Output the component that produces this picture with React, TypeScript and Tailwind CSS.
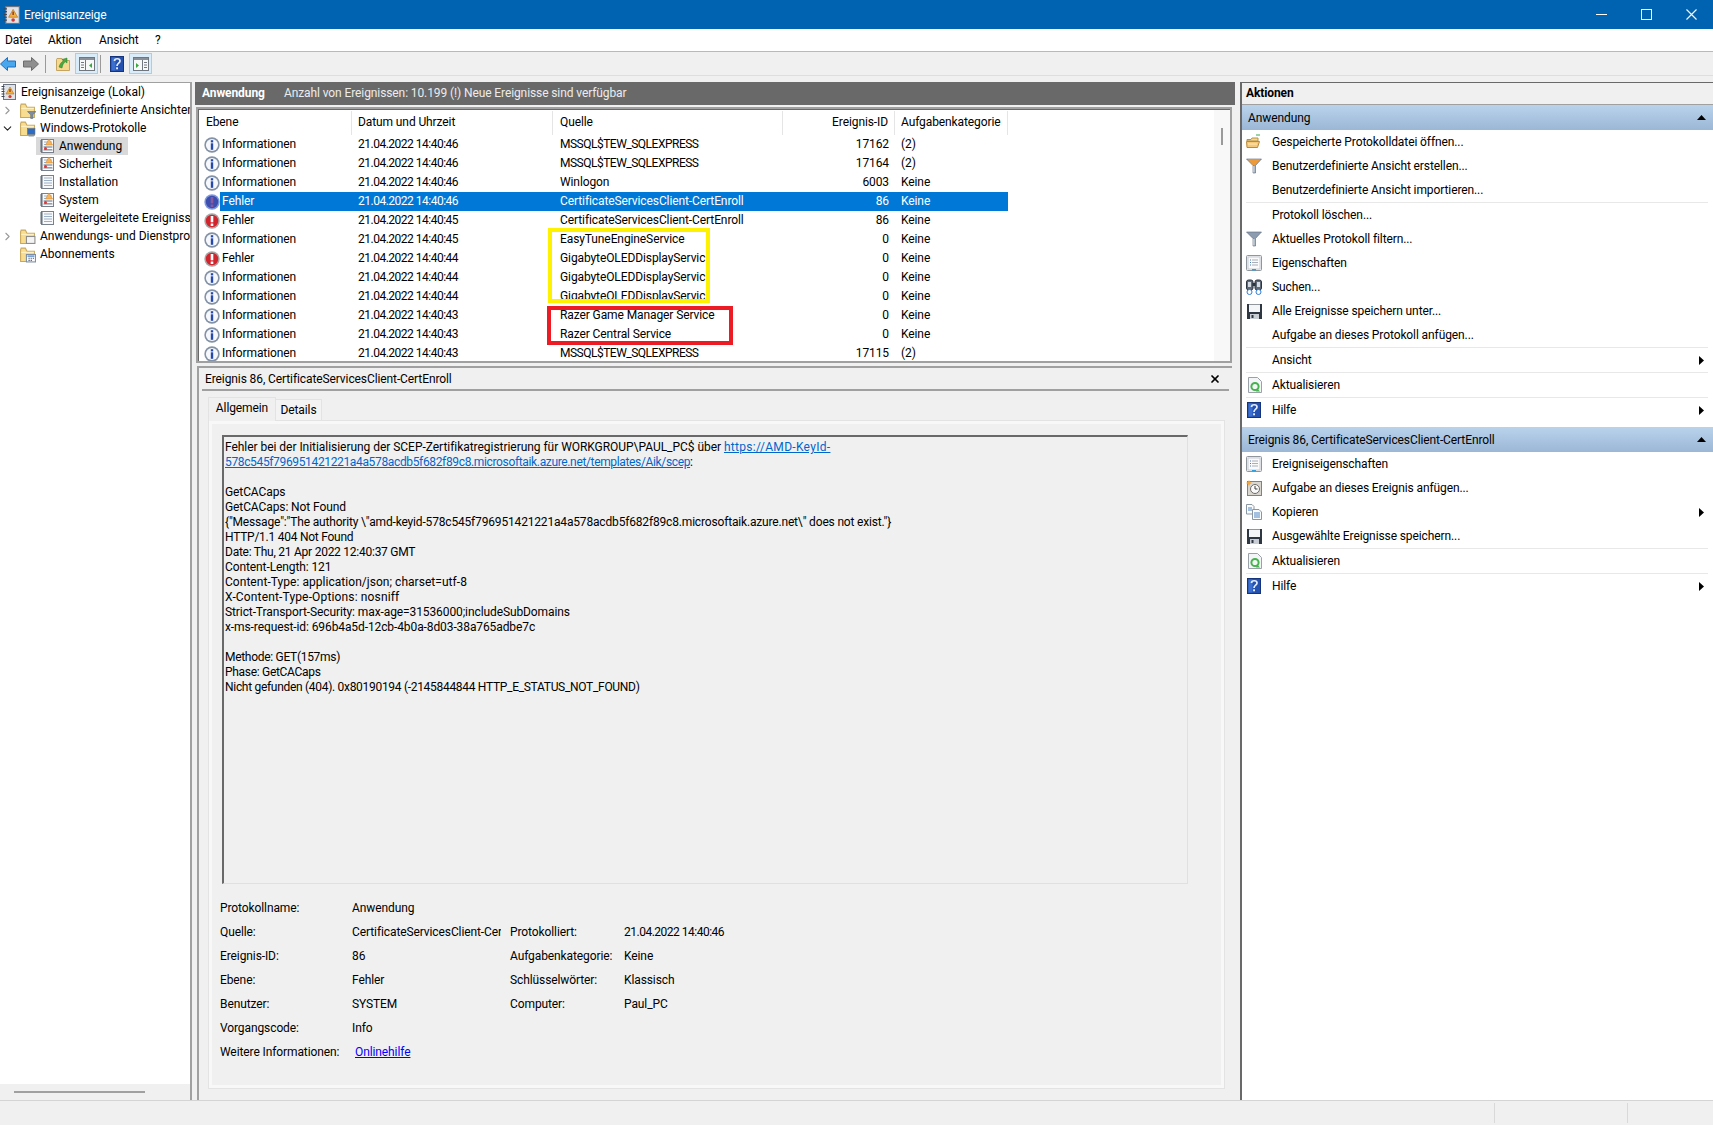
import { ChevronDown, ChevronRight, X } from 'lucide-react'
import type { ReactNode } from 'react'

function InfoIcon() {
  return (
    <svg width="16" height="16" viewBox="0 0 16 16" className="shrink-0">
      <circle cx="8" cy="8" r="7.700" fill="#8492a6" />
      <circle cx="8" cy="8" r="6.100" fill="#f6f8fc" />
      <rect x="6.800" y="3.200" width="2.400" height="2.200" fill="#2548ac" />
      <rect x="6.800" y="6.300" width="2.400" height="6.500" fill="#2548ac" />
    </svg>
  )
}

function ErrorIcon({ selected }: { selected?: boolean }) {
  return (
    <svg width="16" height="16" viewBox="0 0 16 16" className="shrink-0">
      <circle cx="8" cy="8" r="7.700" fill={selected ? '#7f98dc' : '#a7a7a7'} />
      <circle cx="8" cy="8" r="6.200" fill={selected ? '#3d4fae' : '#d2242c'} />
      <rect x="6.700" y="3" width="2.600" height="6.300" fill={selected ? '#8a5a9e' : '#ffffff'} />
      <rect x="6.700" y="10.500" width="2.600" height="2.500" fill={selected ? '#8a5a9e' : '#ffffff'} />
    </svg>
  )
}

function LogIcon({ alert }: { alert?: boolean }) {
  return (
    <svg width="16" height="16" viewBox="0 0 16 16" className="shrink-0">
      <rect x="2.500" y="1.500" width="12" height="13" fill="#f7f9fb" stroke="#77808c" />
      <path d="M1 3h3M1 5h3M1 7h3M1 9h3M1 11h3M1 13h3" stroke="#5d6672" />
      <path d="M5 4h8M5 6.500h8M5 9h8M5 11.500h8" stroke="#9db0c6" />
      {alert && (
        <>
          <path d="M10 1l3.500 6h-7z" fill="#f6b45c" stroke="#d98a2b" strokeWidth="0.6" />
          <path d="M4.500 9h9M4.500 12h9" stroke="#8a8f96" />
          <circle cx="6.500" cy="10.500" r="1.500" fill="#d8383a" />
        </>
      )}
    </svg>
  )
}

function FolderBase() {
  return (
    <>
      <path d="M1.500 3.500V14.500H14.500V5H7.500L6 2H2z" fill="#f8dc8f" stroke="#c9a75a" />
      <path d="M2 6h12" stroke="#fff2c8" />
    </>
  )
}

function FolderIcon({ kind }: { kind: 'filter' | 'logs' | 'apps' | 'subs' }) {
  return (
    <svg width="17" height="17" viewBox="0 0 16 16" className="shrink-0">
      <FolderBase />
      {kind === 'filter' && <path d="M8 9h8l-3 3v3.500h-2V12z" fill="#7d8ea3" stroke="#4f6074" strokeWidth="0.5" />}
      {kind === 'logs' && (
        <>
          <rect x="8" y="8" width="7" height="5.500" fill="#2c6cc4" stroke="#5e6f85" strokeWidth="0.6" />
          <rect x="9" y="14" width="5" height="1.500" fill="#8a96a5" />
        </>
      )}
      {kind === 'apps' && <rect x="7" y="8" width="8" height="6.500" fill="#f4f4f4" stroke="#8c8c8c" />}
      {kind === 'subs' && (
        <>
          <rect x="7" y="8" width="8.500" height="7" fill="#fbfbfb" stroke="#7d8ea3" />
          <path d="M8 9.500h6.500" stroke="#2c6cc4" />
          <path d="M9 11.500h1M11 11.500h1M13 11.500h1M9 13.500h1M11 13.500h1" stroke="#33415a" />
        </>
      )}
    </svg>
  )
}

function AppIcon({ size = 16 }: { size?: number }) {
  return (
    <svg width={size} height={size} viewBox="0 0 16 16" className="shrink-0">
      <rect x="2.500" y="0.500" width="12" height="15" fill="#dfe3e8" stroke="#6b7480" />
      <path d="M0.500 2.500h3M0.500 5h3M0.500 7.500h3M0.500 10h3M0.500 12.500h3" stroke="#3d4652" />
      <path d="M9 3l4 7H5z" fill="#f2b13e" stroke="#b46d1c" strokeWidth="0.6" />
      <rect x="8.400" y="5" width="1.200" height="3" fill="#8a2f22" />
      <circle cx="9" cy="12.500" r="1.600" fill="#d23a34" />
    </svg>
  )
}

function HelpIcon() {
  return (
    <svg width="14" height="16" viewBox="0 0 14 16" className="ml-px shrink-0">
      <rect x="0.500" y="0.500" width="13" height="15" fill="#2450b0" stroke="#16347c" />
      <rect x="1.500" y="1.500" width="4" height="13" fill="#3b70d0" />
      <path d="M4.500 5c0-3 5.500-3 5.500 0 0 2.200-3 2.200-3 5" fill="none" stroke="#e6eefb" strokeWidth="1.700" />
      <rect x="6.100" y="11.300" width="1.900" height="2" fill="#e6eefb" />
    </svg>
  )
}

function OpenIcon() {
  return (
    <svg width="16" height="16" viewBox="0 0 16 16" className="shrink-0">
      <path d="M10 1h4" stroke="#3aa84a" />
      <path d="M1 5.500h4l1-1.500h6v3H1z" fill="#f4d88e" stroke="#b89249" />
      <path d="M0.500 7.500h13l-2 6H1z" fill="#f6c97a" stroke="#b88a3d" />
      <path d="M2 10h9" stroke="#fde9b8" />
    </svg>
  )
}

function FilterIcon({ orange }: { orange?: boolean }) {
  return (
    <svg width="16" height="16" viewBox="0 0 16 16" className="shrink-0">
      <path d="M0.500 1h15L9.500 7.500V15h-2.500V7.500z" fill="#8d9cae" stroke="#5a6a7d" strokeWidth="0.6" />
      {orange && <path d="M1.500 1.300h13L9.300 7H6.700z" fill="#ef9a38" />}
      <path d="M7.300 8h1.200v6.500H7.300z" fill="#d9e0e8" />
    </svg>
  )
}

function PropsIcon() {
  return (
    <svg width="16" height="16" viewBox="0 0 16 16" className="shrink-0">
      <rect x="0.500" y="0.500" width="15" height="15" rx="1" fill="#f1f2f4" stroke="#8f969e" />
      <rect x="2" y="2" width="12" height="12" fill="#fafafa" stroke="#c8ccd1" />
      <path d="M4 5h1M4 7.500h1M4 10h1" stroke="#4a78b8" />
      <path d="M6 5h6M6 7.500h6M6 10h6" stroke="#a8afb8" />
      <rect x="6" y="14" width="4" height="1.500" fill="#2f9ee0" />
    </svg>
  )
}

function FindIcon() {
  return (
    <svg width="16" height="16" viewBox="0 0 16 16" className="shrink-0">
      <rect x="0.500" y="1" width="6.500" height="10" rx="2" fill="#5e6a78" stroke="#2d3540" />
      <rect x="9" y="1" width="6.500" height="10" rx="2" fill="#5e6a78" stroke="#2d3540" />
      <rect x="2" y="3" width="3" height="5" fill="#d4dbe3" />
      <rect x="11" y="3" width="3" height="5" fill="#d4dbe3" />
      <rect x="6.500" y="4" width="3" height="3" fill="#2d3540" />
      <circle cx="3.500" cy="13" r="2.500" fill="#fff" stroke="#2f7fd8" />
      <circle cx="12.500" cy="13" r="2.500" fill="#fff" stroke="#2f7fd8" />
    </svg>
  )
}

function SaveIcon() {
  return (
    <svg width="15" height="15" viewBox="0 0 15 15" className="ml-px shrink-0">
      <rect x="0" y="0" width="15" height="15" fill="#2f3742" />
      <rect x="2" y="0.500" width="11" height="7.500" fill="#f5f6f7" />
      <rect x="3" y="10" width="9" height="5" fill="#c9ced4" />
      <rect x="4.500" y="11" width="2" height="3" fill="#2f3742" />
    </svg>
  )
}

function RefreshIcon() {
  return (
    <svg width="14" height="16" viewBox="0 0 14 16" className="ml-[2px] shrink-0">
      <path d="M0.500 0.500h9l4 4v11H0.500z" fill="#f4f5f6" stroke="#9aa1a8" />
      <circle cx="7" cy="9.500" r="3.600" fill="none" stroke="#46b34f" strokeWidth="2" />
      <path d="M9 11l3 3.500H8z" fill="#46b34f" />
    </svg>
  )
}

function TaskIcon() {
  return (
    <svg width="16" height="16" viewBox="0 0 16 16" className="shrink-0">
      <rect x="1.500" y="1.500" width="14" height="14" fill="#d9d6d0" stroke="#86807a" />
      <circle cx="9" cy="9" r="4.500" fill="#fafafa" stroke="#6e6a66" />
      <path d="M9 6v3h2.500" fill="none" stroke="#3c3c3c" />
      <path d="M3 0l1 2 2 1-2 1-1 2-1-2-2-1 2-1z" fill="#f4a53a" />
    </svg>
  )
}

function CopyIcon() {
  return (
    <svg width="16" height="16" viewBox="0 0 16 16" className="shrink-0">
      <path d="M0.500 0.500H6l2 2V10H0.500z" fill="#fafbfc" stroke="#8b96a3" />
      <path d="M2 4h4M2 6h4" stroke="#4f86c6" />
      <path d="M6.500 5.500H13l2.500 2.500v7.500h-9z" fill="#fafbfc" stroke="#8b96a3" />
      <path d="M8 9h6M8 11h6M8 13h6" stroke="#4f86c6" />
    </svg>
  )
}

function ArrowIcon({ back }: { back?: boolean }) {
  return (
    <svg width="16" height="16" viewBox="0 0 16 16" className="shrink-0">
      {back ? (
        <path d="M0.500 8L7.500 1.500V5H15.500V11H7.500v3.500z" fill="#49a7ee" stroke="#1e6fc2" />
      ) : (
        <path d="M15.500 8L8.500 1.500V5H0.500V11H8.500v3.500z" fill="#8f8f8f" stroke="#6c6c6c" />
      )}
    </svg>
  )
}

function PaneIcon({ right }: { right?: boolean }) {
  return (
    <svg width="16" height="16" viewBox="0 0 16 16" className="shrink-0">
      <rect x="0.500" y="1.500" width="15" height="13" fill="#f7f8f8" stroke="#70777f" />
      <rect x="1" y="2" width="14" height="2" fill="#8a9099" />
      {right ? (
        <>
          <path d="M3 7l3 2.500L3 12z" fill="#37a93f" />
          <path d="M9.500 4v10.500" stroke="#70777f" />
          <path d="M11 6.500h3M11 9h3M11 11.500h3" stroke="#70777f" />
        </>
      ) : (
        <>
          <path d="M13 7l-3 2.500L13 12z" fill="#37a93f" />
          <path d="M6.500 4v10.500" stroke="#70777f" />
          <path d="M2 6.500h3M2 9h3M2 11.500h3" stroke="#70777f" />
        </>
      )}
    </svg>
  )
}

function UpFolderIcon() {
  return (
    <svg width="16" height="16" viewBox="0 0 16 16" className="shrink-0">
      <path d="M1.500 3.500V14.500H14.500V4.500H8L7 2.500H2z" fill="#f6d98f" stroke="#c5a55f" />
      <path d="M4 11c1-3 2-5 4.500-6L7 3.500 12 2v5L10.300 5.800C8.500 7 7.500 9 7 12z" fill="#4aa83f" stroke="#2c7d2a" strokeWidth="0.5" />
    </svg>
  )
}

function CollapseArrow() {
  return (
    <svg width="9" height="5" viewBox="0 0 9 5" className="shrink-0">
      <path d="M4.500 0L9 5H0z" fill="#000" />
    </svg>
  )
}

function SubmenuArrow() {
  return (
    <svg width="5" height="9" viewBox="0 0 5 9" className="shrink-0">
      <path d="M0 0l5 4.500L0 9z" fill="#000" />
    </svg>
  )
}

function WindowButtons() {
  return (
    <div className="-mr-px flex">
      <div className="flex w-[45px] justify-center">
        <svg width="11" height="11" viewBox="0 0 11 11" shapeRendering="crispEdges">
          <path d="M0 5.500h11" stroke="#fff" />
        </svg>
      </div>
      <div className="flex w-[45px] justify-center">
        <svg width="11" height="11" viewBox="0 0 11 11" shapeRendering="crispEdges">
          <rect x="0.500" y="0.500" width="10" height="10" fill="none" stroke="#fff" />
        </svg>
      </div>
      <div className="flex w-[45px] justify-center">
        <svg width="11" height="11" viewBox="0 0 11 11">
          <path d="M0.500 0.500l10 10M10.500 0.500l-10 10" stroke="#fff" strokeWidth="1.100" />
        </svg>
      </div>
    </div>
  )
}

type Row = { error?: boolean; selected?: boolean; time: string; source: string; id: string; cat: string }

const rows: Row[] = [
  { time: '21.04.2022 14:40:46', source: 'MSSQL$TEW_SQLEXPRESS', id: '17162', cat: '(2)' },
  { time: '21.04.2022 14:40:46', source: 'MSSQL$TEW_SQLEXPRESS', id: '17164', cat: '(2)' },
  { time: '21.04.2022 14:40:46', source: 'Winlogon', id: '6003', cat: 'Keine' },
  { error: true, selected: true, time: '21.04.2022 14:40:46', source: 'CertificateServicesClient-CertEnroll', id: '86', cat: 'Keine' },
  { error: true, time: '21.04.2022 14:40:45', source: 'CertificateServicesClient-CertEnroll', id: '86', cat: 'Keine' },
  { time: '21.04.2022 14:40:45', source: 'EasyTuneEngineService', id: '0', cat: 'Keine' },
  { error: true, time: '21.04.2022 14:40:44', source: 'GigabyteOLEDDisplayServic', id: '0', cat: 'Keine' },
  { time: '21.04.2022 14:40:44', source: 'GigabyteOLEDDisplayServic', id: '0', cat: 'Keine' },
  { time: '21.04.2022 14:40:44', source: 'GigabyteOLEDDisplayServic', id: '0', cat: 'Keine' },
  { time: '21.04.2022 14:40:43', source: 'Razer Game Manager Service', id: '0', cat: 'Keine' },
  { time: '21.04.2022 14:40:43', source: 'Razer Central Service', id: '0', cat: 'Keine' },
  { time: '21.04.2022 14:40:43', source: 'MSSQL$TEW_SQLEXPRESS', id: '17115', cat: '(2)' },
]

function TreeRow({ indent, icon, label, chevron }: { indent: string; icon: ReactNode; label: string; chevron?: 'right' | 'down' }) {
  return (
    <div className={`relative flex h-[18px] items-center whitespace-nowrap ${indent}`}>
      {chevron === 'right' && <ChevronRight size={13} className="absolute left-[1px] text-[#9a9a9a]" />}
      {chevron === 'down' && <ChevronDown size={13} className="absolute left-[1px] text-[#222]" />}
      {icon}
      <div className="ml-[4px] leading-[18px]">{label}</div>
    </div>
  )
}

function Tree() {
  return (
    <div className="flex w-[192px] shrink-0 flex-col border-t border-r-2 border-[#a0a0a0] bg-white tracking-normal">
      <div className="flex-1 overflow-hidden">
        <TreeRow indent="pl-[1px]" icon={<AppIcon />} label="Ereignisanzeige (Lokal)" />
        <TreeRow indent="pl-[19px]" icon={<FolderIcon kind="filter" />} label="Benutzerdefinierte Ansichten" chevron="right" />
        <TreeRow indent="pl-[19px]" icon={<FolderIcon kind="logs" />} label="Windows-Protokolle" chevron="down" />
        <div className="ml-[36px] flex h-[18px] w-[92px] items-center bg-[#d9d9d9] pl-[3px]">
          <LogIcon alert />
          <div className="ml-[4px] leading-[18px]">Anwendung</div>
        </div>
        <TreeRow indent="pl-[39px]" icon={<LogIcon alert />} label="Sicherheit" />
        <TreeRow indent="pl-[39px]" icon={<LogIcon />} label="Installation" />
        <TreeRow indent="pl-[39px]" icon={<LogIcon alert />} label="System" />
        <TreeRow indent="pl-[39px]" icon={<LogIcon />} label="Weitergeleitete Ereignisse" />
        <TreeRow indent="pl-[19px]" icon={<FolderIcon kind="apps" />} label="Anwendungs- und Dienstprotokolle" chevron="right" />
        <TreeRow indent="pl-[19px]" icon={<FolderIcon kind="subs" />} label="Abonnements" />
      </div>
      <div className="flex h-[16px] items-center bg-[#f0f0f0] pl-[14px]">
        <div className="h-[2px] w-[131px] bg-[#a0a0a0]" />
      </div>
    </div>
  )
}

function HeaderCell({ className, children }: { className: string; children: string }) {
  return <div className={`h-[24px] border-r border-[#e5e5e5] leading-[23px] ${className}`}>{children}</div>
}

function EventList() {
  return (
    <div className="border-2 border-[#a0a0a0] bg-white">
      <div className="relative flex h-[252px] overflow-hidden border-t border-l border-[#696969]">
        <div className="flex-1 pt-[1px] pl-[1px]">
          <div className="flex h-[24px]">
            <HeaderCell className="w-[152px] pl-[6px]">Ebene</HeaderCell>
            <HeaderCell className="w-[201px] pl-[6px]">Datum und Uhrzeit</HeaderCell>
            <HeaderCell className="w-[230px] pl-[7px]">Quelle</HeaderCell>
            <HeaderCell className="w-[112px] pr-[6px] text-right">Ereignis-ID</HeaderCell>
            <HeaderCell className="w-[113px] pl-[6px]">Aufgabenkategorie</HeaderCell>
          </div>
          {rows.map((row, i) => (
            <div key={i} className="flex h-[19px] whitespace-nowrap">
              <div className="flex w-[20px] items-center pl-[4px]">
                {row.error ? <ErrorIcon selected={row.selected} /> : <InfoIcon />}
              </div>
              <div className={`flex leading-[19px] ${row.selected ? 'bg-[#0078d7] text-white' : ''}`}>
                <div className="w-[132px] pl-[2px]">{row.error ? 'Fehler' : 'Informationen'}</div>
                <div className="w-[201px] pl-[6px] tracking-[-0.5px]">{row.time}</div>
                <div className={`w-[230px] overflow-hidden pl-[7px] ${row.source.startsWith('MSSQL') ? 'tracking-[-0.5px]' : ''}`}>{row.source}</div>
                <div className="w-[112px] pr-[6px] text-right">{row.id}</div>
                <div className="w-[113px] pl-[6px]">{row.cat}</div>
              </div>
            </div>
          ))}
        </div>
        <div className="w-[16px] shrink-0 bg-[#f8f8f8] pt-[18px] pl-[7px]">
          <div className="h-[17px] w-[2px] bg-[#9a9a9a]" />
        </div>
        <div className="absolute top-[118px] left-[349px] h-[75px] w-[162px] border-[4px] border-[#fff200]" />
        <div className="absolute top-[196px] left-[348px] h-[39px] w-[186px] border-[4px] border-[#ed1c24]" />
      </div>
    </div>
  )
}

const messageLines: [string, string][] = [
  ['GetCACaps', ''],
  ['GetCACaps: Not Found', ''],
  ['{"Message":"The authority \\"amd-keyid-578c545f796951421221a4a578acdb5f682f89c8.microsoftaik.azure.net\\" does not exist."}', 'tracking-[-0.17px]'],
  ['HTTP/1.1 404 Not Found', 'tracking-[-0.25px]'],
  ['Date: Thu, 21 Apr 2022 12:40:37 GMT', 'tracking-[-0.25px]'],
  ['Content-Length: 121', ''],
  ['Content-Type: application/json; charset=utf-8', 'tracking-[0.04px]'],
  ['X-Content-Type-Options: nosniff', 'tracking-[0.15px]'],
  ['Strict-Transport-Security: max-age=31536000;includeSubDomains', ''],
  ['x-ms-request-id: 696b4a5d-12cb-4b0a-8d03-38a765adbe7c', ''],
  ['', ''],
  ['Methode: GET(157ms)', 'tracking-[-0.3px]'],
  ['Phase: GetCACaps', 'tracking-[-0.3px]'],
  ['Nicht gefunden (404). 0x80190194 (-2145844844 HTTP_E_STATUS_NOT_FOUND)', 'tracking-[-0.3px]'],
]

function PropRow({ label, value, label2, value2, link }: { label: string; value?: string; label2?: string; value2?: string; link?: string }) {
  return (
    <div className="flex h-[24px] items-center whitespace-nowrap pl-[8px]">
      <div className="w-[132px]">{label}</div>
      <div className="w-[149px] overflow-hidden">
        {value}
        {link && <span className="ml-[3px] text-[#0000ff] underline">{link}</span>}
      </div>
      <div className="ml-[9px] w-[114px]">{label2}</div>
      <div className={value2?.startsWith('21.') ? 'tracking-[-0.5px]' : ''}>{value2}</div>
    </div>
  )
}

function Details() {
  return (
    <div className="flex flex-1 flex-col border-t-2 border-l-2 border-[#a0a0a0] pr-[3px] pl-[3px]">
      <div className="flex h-[23px] items-center justify-between border-b-2 border-[#a0a0a0] pr-[8px] pl-[3px]">
        <span>Ereignis 86, CertificateServicesClient-CertEnroll</span>
        <X size={12} strokeWidth={3.5} className="text-black" />
      </div>
      <div className="flex pt-[6px] pl-[6px]">
        <div className="relative z-10 -mb-px h-[24px] w-[68px] border-x border-t border-[#e3e3e3] bg-[#f0f0f0] text-center leading-[20px]">Allgemein</div>
        <div className="mt-[2px] h-[21px] w-[46px] border-t border-r border-[#e3e3e3] bg-[#f3f3f3] text-center leading-[21px]">Details</div>
      </div>
      <div className="mr-[4px] mb-[11px] ml-[6px] flex-1 border border-[#e3e3e3]">
        <div className="h-full border-[3px] border-[#f8f8f8] pt-[11px]">
          <div className="ml-[10px] h-[449px] w-[966px] overflow-hidden border-t-2 border-r border-b border-l-2 border-t-[#696969] border-r-[#e0e0e0] border-b-[#e0e0e0] border-l-[#696969] pt-[3px] pl-[1px] leading-[15px]">
            <div className="tracking-[-0.04px]">Fehler bei der Initialisierung der SCEP-Zertifikatregistrierung für WORKGROUP\PAUL_PC$ über <span className="tracking-[0.3px] text-[#0066cc] underline">https://AMD-KeyId-</span></div>
            <div><span className="tracking-[-0.35px] text-[#0066cc] underline">578c545f796951421221a4a578acdb5f682f89c8.microsoftaik.azure.net/templates/Aik/scep</span>:</div>
            <div className="h-[15px]" />
            {messageLines.map(([line, spacing], i) => (
              <div key={i} className={`h-[15px] whitespace-nowrap ${spacing}`}>{line}</div>
            ))}
          </div>
          <div className="mt-[12px]">
            <PropRow label="Protokollname:" value="Anwendung" />
            <PropRow label="Quelle:" value="CertificateServicesClient-CertEnroll" label2="Protokolliert:" value2="21.04.2022 14:40:46" />
            <PropRow label="Ereignis-ID:" value="86" label2="Aufgabenkategorie:" value2="Keine" />
            <PropRow label="Ebene:" value="Fehler" label2="Schlüsselwörter:" value2="Klassisch" />
            <PropRow label="Benutzer:" value="SYSTEM" label2="Computer:" value2="Paul_PC" />
            <PropRow label="Vorgangscode:" value="Info" />
            <PropRow label="Weitere Informationen:" link="Onlinehilfe" />
          </div>
        </div>
      </div>
    </div>
  )
}

function ActionHeader({ children }: { children: string }) {
  return (
    <div className="flex h-[25px] items-center justify-between bg-linear-to-b from-[#bad3ec] to-[#9bb7d6] pr-[7px] pl-[6px]">
      <span>{children}</span>
      <CollapseArrow />
    </div>
  )
}

function Action({ icon, label, arrow }: { icon?: ReactNode; label: string; arrow?: boolean }) {
  return (
    <div className="flex h-[24px] items-center pr-[9px] pl-[4px]">
      <div className="flex w-[26px] items-center">{icon}</div>
      <span className="flex-1">{label}</span>
      {arrow && <SubmenuArrow />}
    </div>
  )
}

function Sep() {
  return <div className="mr-[5px] ml-[4px] h-px bg-[#e8e8e8]" />
}

function Actions() {
  return (
    <div className="flex flex-1 flex-col border-t border-l-2 border-[#696969] bg-white">
      <div className="h-[22px] border-b border-[#a0a0a0] bg-[#f0f0f0] pl-[4px] leading-[21px] font-bold">Aktionen</div>
      <ActionHeader>Anwendung</ActionHeader>
      <Action icon={<OpenIcon />} label="Gespeicherte Protokolldatei öffnen..." />
      <Action icon={<FilterIcon orange />} label="Benutzerdefinierte Ansicht erstellen..." />
      <Action label="Benutzerdefinierte Ansicht importieren..." />
      <Sep />
      <Action label="Protokoll löschen..." />
      <Action icon={<FilterIcon />} label="Aktuelles Protokoll filtern..." />
      <Action icon={<PropsIcon />} label="Eigenschaften" />
      <Action icon={<FindIcon />} label="Suchen..." />
      <Action icon={<SaveIcon />} label="Alle Ereignisse speichern unter..." />
      <Action label="Aufgabe an dieses Protokoll anfügen..." />
      <Sep />
      <Action label="Ansicht" arrow />
      <Sep />
      <Action icon={<RefreshIcon />} label="Aktualisieren" />
      <Sep />
      <Action icon={<HelpIcon />} label="Hilfe" arrow />
      <div className="h-[5px]" />
      <ActionHeader>Ereignis 86, CertificateServicesClient-CertEnroll</ActionHeader>
      <Action icon={<PropsIcon />} label="Ereigniseigenschaften" />
      <Action icon={<TaskIcon />} label="Aufgabe an dieses Ereignis anfügen..." />
      <Action icon={<CopyIcon />} label="Kopieren" arrow />
      <Action icon={<SaveIcon />} label="Ausgewählte Ereignisse speichern..." />
      <Sep />
      <Action icon={<RefreshIcon />} label="Aktualisieren" />
      <Sep />
      <Action icon={<HelpIcon />} label="Hilfe" arrow />
    </div>
  )
}

export default function App() {
  return (
    <div className="flex h-[1125px] w-[1713px] flex-col overflow-hidden bg-[#f0f0f0] text-[12px] tracking-[-0.1px] text-black [font-family:Roboto,sans-serif]">
      <div className="flex h-[29px] shrink-0 items-center bg-[#0063b1] pl-[3px] text-white">
        <AppIcon size={18} />
        <span className="ml-[3px] flex-1">Ereignisanzeige</span>
        <WindowButtons />
      </div>
      <div className="flex h-[23px] shrink-0 items-center border-b border-[#b9b9b9] bg-white pl-[5px]">
        <span className="w-[43px]">Datei</span>
        <span className="w-[51px]">Aktion</span>
        <span className="w-[56px]">Ansicht</span>
        <span>?</span>
      </div>
      <div className="flex h-[24px] shrink-0 items-center border-b border-[#dedede] bg-[#f0f0f0]">
        <ArrowIcon back />
        <div className="ml-[7px]"><ArrowIcon /></div>
        <div className="mr-[9px] ml-[6px] h-[18px] w-px bg-[#9a9a9a]" />
        <UpFolderIcon />
        <div className="ml-[4px] flex h-[21px] w-[23px] items-center justify-center border border-[#99d1ff] bg-[#d8ecfa]"><PaneIcon /></div>
        <div className="ml-[2px] h-[18px] w-px bg-[#9a9a9a]" />
        <div className="ml-[8px]"><HelpIcon /></div>
        <div className="ml-[5px] flex h-[21px] w-[23px] items-center justify-center border border-[#99d1ff] bg-[#d8ecfa]"><PaneIcon right /></div>
      </div>
      <div className="flex min-h-0 flex-1 pt-[6px]">
        <Tree />
        <div className="ml-[3px] flex w-[1040px] shrink-0 flex-col">
          <div className="flex h-[23px] shrink-0 items-center bg-[#696969] pb-px pl-[7px] text-[#ececec]">
            <span className="w-[82px] font-bold text-white">Anwendung</span>
            <span>Anzahl von Ereignissen: 10.199 (!) Neue Ereignisse sind verfügbar</span>
          </div>
          <div className="mt-[2px] shrink-0 pr-[3px] pl-px">
            <EventList />
          </div>
          <div className="mt-[3px] flex min-h-0 flex-1 pr-[3px] pl-[2px]">
            <Details />
          </div>
        </div>
        <div className="ml-[5px] flex flex-1">
          <Actions />
        </div>
      </div>
      <div className="flex h-[25px] shrink-0 items-center justify-end border-t border-[#d4d4d4] bg-[#f0f0f0]">
        <div className="h-[20px] w-[133px] border-l border-[#d9d9d9]" />
        <div className="h-[20px] w-[86px] border-l border-[#d9d9d9]" />
      </div>
    </div>
  )
}
